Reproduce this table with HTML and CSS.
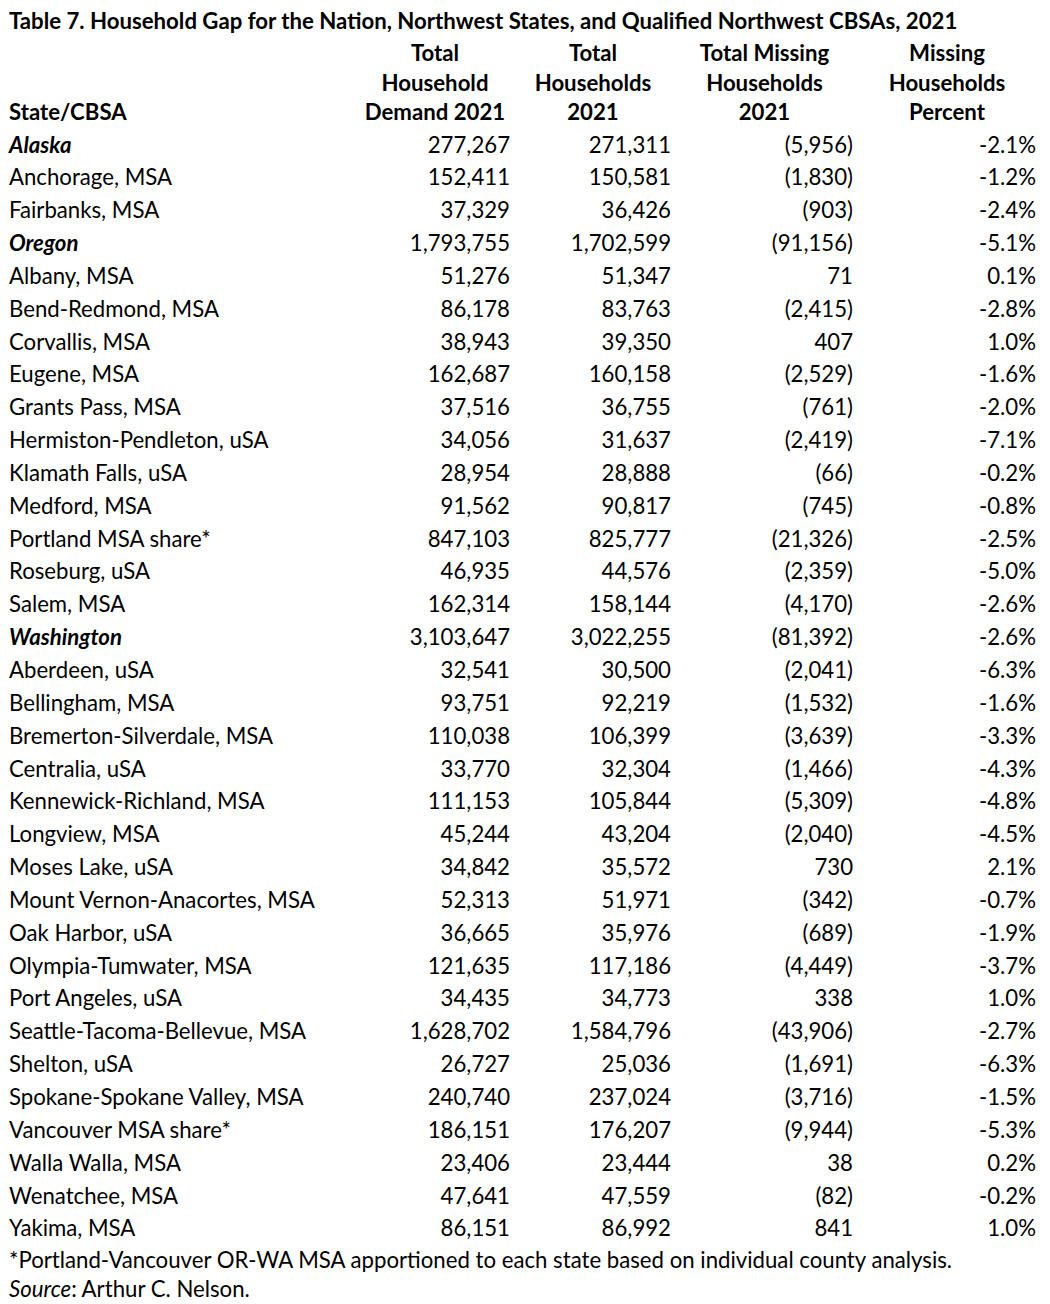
FILE: index.html
```html
<!DOCTYPE html>
<html>
<head>
<meta charset="utf-8">
<link rel="stylesheet" href="styles.css">
</head>
<body>
<div class="page">
  <div class="title">Table 7. Household Gap for the Nation, Northwest States, and Qualified Northwest CBSAs, 2021</div>
  <table class="gap">
    <colgroup>
      <col class="c0"><col class="c1"><col class="c2"><col class="c3"><col class="c4">
    </colgroup>
    <thead>
      <tr>
        <th class="name">State/CBSA</th>
        <th>Total<br>Household<br>Demand 2021</th>
        <th>Total<br>Households<br>2021</th>
        <th>Total Missing<br>Households<br>2021</th>
        <th>Missing<br>Households<br>Percent</th>
      </tr>
    </thead>
    <tbody>
      <tr class="state"><td>Alaska</td><td>277,267</td><td>271,311</td><td>(5,956)</td><td>-2.1%</td></tr>
      <tr><td>Anchorage, MSA</td><td>152,411</td><td>150,581</td><td>(1,830)</td><td>-1.2%</td></tr>
      <tr><td>Fairbanks, MSA</td><td>37,329</td><td>36,426</td><td>(903)</td><td>-2.4%</td></tr>
      <tr class="state"><td>Oregon</td><td>1,793,755</td><td>1,702,599</td><td>(91,156)</td><td>-5.1%</td></tr>
      <tr><td>Albany, MSA</td><td>51,276</td><td>51,347</td><td>71</td><td>0.1%</td></tr>
      <tr><td>Bend-Redmond, MSA</td><td>86,178</td><td>83,763</td><td>(2,415)</td><td>-2.8%</td></tr>
      <tr><td>Corvallis, MSA</td><td>38,943</td><td>39,350</td><td>407</td><td>1.0%</td></tr>
      <tr><td>Eugene, MSA</td><td>162,687</td><td>160,158</td><td>(2,529)</td><td>-1.6%</td></tr>
      <tr><td>Grants Pass, MSA</td><td>37,516</td><td>36,755</td><td>(761)</td><td>-2.0%</td></tr>
      <tr><td>Hermiston-Pendleton, uSA</td><td>34,056</td><td>31,637</td><td>(2,419)</td><td>-7.1%</td></tr>
      <tr><td>Klamath Falls, uSA</td><td>28,954</td><td>28,888</td><td>(66)</td><td>-0.2%</td></tr>
      <tr><td>Medford, MSA</td><td>91,562</td><td>90,817</td><td>(745)</td><td>-0.8%</td></tr>
      <tr><td>Portland MSA share*</td><td>847,103</td><td>825,777</td><td>(21,326)</td><td>-2.5%</td></tr>
      <tr><td>Roseburg, uSA</td><td>46,935</td><td>44,576</td><td>(2,359)</td><td>-5.0%</td></tr>
      <tr><td>Salem, MSA</td><td>162,314</td><td>158,144</td><td>(4,170)</td><td>-2.6%</td></tr>
      <tr class="state"><td>Washington</td><td>3,103,647</td><td>3,022,255</td><td>(81,392)</td><td>-2.6%</td></tr>
      <tr><td>Aberdeen, uSA</td><td>32,541</td><td>30,500</td><td>(2,041)</td><td>-6.3%</td></tr>
      <tr><td>Bellingham, MSA</td><td>93,751</td><td>92,219</td><td>(1,532)</td><td>-1.6%</td></tr>
      <tr><td>Bremerton-Silverdale, MSA</td><td>110,038</td><td>106,399</td><td>(3,639)</td><td>-3.3%</td></tr>
      <tr><td>Centralia, uSA</td><td>33,770</td><td>32,304</td><td>(1,466)</td><td>-4.3%</td></tr>
      <tr><td>Kennewick-Richland, MSA</td><td>111,153</td><td>105,844</td><td>(5,309)</td><td>-4.8%</td></tr>
      <tr><td>Longview, MSA</td><td>45,244</td><td>43,204</td><td>(2,040)</td><td>-4.5%</td></tr>
      <tr><td>Moses Lake, uSA</td><td>34,842</td><td>35,572</td><td>730</td><td>2.1%</td></tr>
      <tr><td>Mount Vernon-Anacortes, MSA</td><td>52,313</td><td>51,971</td><td>(342)</td><td>-0.7%</td></tr>
      <tr><td>Oak Harbor, uSA</td><td>36,665</td><td>35,976</td><td>(689)</td><td>-1.9%</td></tr>
      <tr><td>Olympia-Tumwater, MSA</td><td>121,635</td><td>117,186</td><td>(4,449)</td><td>-3.7%</td></tr>
      <tr><td>Port Angeles, uSA</td><td>34,435</td><td>34,773</td><td>338</td><td>1.0%</td></tr>
      <tr><td>Seattle-Tacoma-Bellevue, MSA</td><td>1,628,702</td><td>1,584,796</td><td>(43,906)</td><td>-2.7%</td></tr>
      <tr><td>Shelton, uSA</td><td>26,727</td><td>25,036</td><td>(1,691)</td><td>-6.3%</td></tr>
      <tr><td>Spokane-Spokane Valley, MSA</td><td>240,740</td><td>237,024</td><td>(3,716)</td><td>-1.5%</td></tr>
      <tr><td>Vancouver MSA share*</td><td>186,151</td><td>176,207</td><td>(9,944)</td><td>-5.3%</td></tr>
      <tr><td>Walla Walla, MSA</td><td>23,406</td><td>23,444</td><td>38</td><td>0.2%</td></tr>
      <tr><td>Wenatchee, MSA</td><td>47,641</td><td>47,559</td><td>(82)</td><td>-0.2%</td></tr>
      <tr><td>Yakima, MSA</td><td>86,151</td><td>86,992</td><td>841</td><td>1.0%</td></tr>
    </tbody>
  </table>
  <div class="notes">
    <div class="note">*Portland-Vancouver OR-WA MSA apportioned to each state based on individual county analysis.</div>
    <div class="note"><em>Source</em>: Arthur C. Nelson.</div>
  </div>
</div>
</body>
</html>
```

FILE: styles.css
```css
html, body {
  margin: 0;
  padding: 0;
  background: #ffffff;
}
body {
  font-family: Lato, "Open Sans", "Liberation Sans", sans-serif;
  font-size: 22.2px;
  color: #000000;
}
.page {
  padding: 4px 0 0 9px;
  width: 1032px;
}
.title {
  font-weight: 700;
  line-height: 33px;
  white-space: nowrap;
}
.gap {
  border-collapse: collapse;
  width: 1032px;
  table-layout: fixed;
}
.c0 { width: 351px; }
.c1 { width: 155px; }
.c2 { width: 161px; }
.c3 { width: 182px; }
.c4 { width: 183px; }
.gap th {
  font-weight: 700;
  line-height: 29.5px;
  text-align: center;
  vertical-align: bottom;
  padding: 1px 5px 0 0;
}
.gap th.name {
  text-align: left;
}
.gap td {
  height: 32.85px;
  padding: 4px 5px 0 0;
  text-align: right;
  white-space: nowrap;
  line-height: 28.85px;
  box-sizing: border-box;
}
.gap td:first-child {
  text-align: left;
}
.gap tr.state td:first-child {
  font-weight: 700;
  font-style: italic;
}
.notes {
  padding-top: 2px;
}
.note {
  line-height: 29px;
  white-space: nowrap;
}
```
